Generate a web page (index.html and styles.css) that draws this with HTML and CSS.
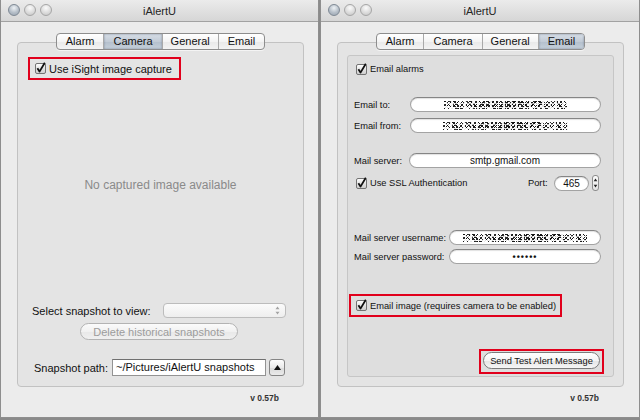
FILE: index.html
```html
<!DOCTYPE html>
<html>
<head>
<meta charset="utf-8">
<title>iAlertU</title>
<link rel="stylesheet" href="styles.css">
</head>
<body>
<div class="desk">
  <div class="window win-left">
    <div class="titlebar">
      <div class="lights"><span class="light close"></span><span class="light"></span><span class="light"></span></div>
      <div class="title">iAlertU</div>
      <div></div>
    </div>
    <div class="content">
      <div class="tabview">
        <div class="segmented">
          <span class="seg">Alarm</span><span class="seg sel">Camera</span><span class="seg gen">General</span><span class="seg">Email</span>
        </div>
        <div class="tabbox camera">
          <div class="hl hl-isight">
            <span class="cb"><svg viewBox="0 0 9 9" width="9" height="9"><path d="M1.4 4.3 L3.5 7.6 L8.8 -1.2" fill="none" stroke="#111" stroke-width="1.8" stroke-linejoin="round"/></svg></span>
            <span class="cb-text">Use iSight image capture</span>
          </div>
          <div class="preview">No captured image available</div>
          <div class="select-row">
            <span class="sel-lbl">Select snapshot to view:</span>
            <span class="popup"><svg width="5" height="9" viewBox="0 0 5 9"><path d="M2.5 0.5 L4.5 3.2 L0.5 3.2Z M2.5 8.5 L4.5 5.8 L0.5 5.8Z" fill="#a3a3a3"/></svg></span>
          </div>
          <div class="btn-row"><span class="pill disabled">Delete historical snapshots</span></div>
          <div class="path-row">
            <span class="path-lbl">Snapshot path:</span>
            <span class="pathfield">~/Pictures/iAlertU snapshots</span>
            <span class="sqbtn"><svg width="7" height="5" viewBox="0 0 7 5"><path d="M3.5 0 L7 5 L0 5Z" fill="#111"/></svg></span>
          </div>
        </div>
      </div>
      <div class="version">v 0.57b</div>
    </div>
  </div>

  <div class="window win-right">
    <div class="titlebar">
      <div class="lights"><span class="light close"></span><span class="light"></span><span class="light"></span></div>
      <div class="title">iAlertU</div>
      <div></div>
    </div>
    <div class="content">
      <div class="tabview">
        <div class="segmented">
          <span class="seg">Alarm</span><span class="seg">Camera</span><span class="seg gen">General</span><span class="seg sel">Email</span>
        </div>
        <div class="tabbox email">
          <div class="inner">
            <div class="cb-row alarms">
              <span class="cb"><svg viewBox="0 0 9 9" width="9" height="9"><path d="M1.4 4.3 L3.5 7.6 L8.8 -1.2" fill="none" stroke="#111" stroke-width="1.8" stroke-linejoin="round"/></svg></span>
              <span class="cb-text">Email alarms</span>
            </div>
            <div class="frow to">
              <span class="flbl">Email to:</span>
              <span class="field"><span class="noise n1"></span></span>
            </div>
            <div class="frow from">
              <span class="flbl">Email from:</span>
              <span class="field"><span class="noise n2"></span></span>
            </div>
            <div class="frow server">
              <span class="flbl">Mail server:</span>
              <span class="field">smtp.gmail.com</span>
            </div>
            <div class="ssl-row">
              <span class="cb"><svg viewBox="0 0 9 9" width="9" height="9"><path d="M1.4 4.3 L3.5 7.6 L8.8 -1.2" fill="none" stroke="#111" stroke-width="1.8" stroke-linejoin="round"/></svg></span>
              <span class="cb-text">Use SSL Authentication</span>
              <span class="port">
                <span class="port-lbl">Port:</span>
                <span class="field portfield">465</span>
                <span class="stepper"><svg width="5" height="12" viewBox="0 0 5 12"><path d="M2.5 1.5 L4.3 4.2 L0.7 4.2Z M2.5 10.5 L4.3 7.8 L0.7 7.8Z" fill="#222"/></svg></span>
              </span>
            </div>
            <div class="frow user">
              <span class="flbl wide">Mail server username:</span>
              <span class="field"><span class="noise n3"></span></span>
            </div>
            <div class="frow pass">
              <span class="flbl wide">Mail server password:</span>
              <span class="field dots">••••••</span>
            </div>
            <div class="hl hl-image">
              <span class="cb"><svg viewBox="0 0 9 9" width="9" height="9"><path d="M1.4 4.3 L3.5 7.6 L8.8 -1.2" fill="none" stroke="#111" stroke-width="1.8" stroke-linejoin="round"/></svg></span>
              <span class="cb-text">Email image (requires camera to be enabled)</span>
            </div>
            <div class="hl hl-send"><span class="pill send">Send Test Alert Message</span></div>
          </div>
        </div>
      </div>
      <div class="version">v 0.57b</div>
    </div>
  </div>
</div>
</body>
</html>
```

FILE: styles.css
```css
* { box-sizing: border-box; margin: 0; padding: 0; }
html, body { width: 640px; height: 420px; overflow: hidden; }
body {
  background: #8a8a8a;
  font-family: "Liberation Sans", Arial, sans-serif;
  font-size: 11px;
  color: #111;
}
.desk { display: flex; gap: 1px; height: 420px; }
.window {
  height: 418px;
  background: #ececec;
  border-left: 1px solid #8e8e8e;
  border-right: 1px solid #8e8e8e;
  border-bottom: 1px solid #8e8e8e;
  display: flex;
  flex-direction: column;
}
.win-left { width: 319px; }
.win-right { width: 320px; }

.titlebar {
  height: 22px;
  background: linear-gradient(#ebebeb, #d6d6d6);
  border-bottom: 1px solid #a2a2a2;
  display: grid;
  grid-template-columns: 1fr auto 1fr;
  align-items: center;
}
.lights { display: flex; gap: 4px; padding-left: 7px; align-self: start; margin-top: 4px; }
.light {
  width: 12px; height: 12px; border-radius: 50%;
  background: radial-gradient(circle at 50% 30%, #fbfbfb, #dcdcdc 55%, #c2c2c2);
  border: 1px solid #a6a6a6;
}
.light.close {
  background: radial-gradient(circle at 50% 30%, #eef2f5, #b5bec8 55%, #98a3af);
  border-color: #7f8994;
}
.title { color: #262626; font-size: 11px; }

.content { flex: 1; display: flex; flex-direction: column; padding: 11px 14px 0 16px; }
.win-right .content { padding-right: 15px; }
.tabview { display: flex; flex-direction: column; align-items: center; }
.segmented {
  position: relative; z-index: 1;
  display: flex; height: 17px; margin-bottom: -8px;
  border: 1px solid #8d8d8d; border-radius: 4px;
  background: linear-gradient(#ffffff, #f4f4f4 50%, #e9e9e9 51%, #f3f3f3);
  overflow: hidden;
  box-shadow: 0 1px 0 rgba(255,255,255,0.6);
}
.seg { padding: 0 9px; line-height: 15px; font-size: 11px; color: #111; border-left: 1px solid #a9a9a9; }
.seg:first-child { border-left: none; padding-left: 9px; }
.seg.gen { padding: 0 8px; }
.seg.sel {
  background: linear-gradient(#d7dee6, #c2cbd6 50%, #b3bfcc 51%, #c6d0da);
  box-shadow: inset 0 0 2px rgba(60,75,95,0.6);
}
.tabbox {
  width: 100%; height: 345px;
  border: 1px solid #c2c2c2; border-radius: 4px;
  background: #e4e4e4;
}

/* camera tab */
.camera { display: flex; flex-direction: column; padding: 14px 0 10px; }
.hl { border: 2px solid #e1001c; display: flex; align-items: center; }
.hl-isight { margin-left: 10px; width: 153px; height: 23px; padding-left: 5px; gap: 3px; }
.cb {
  width: 11px; height: 11px; flex: none;
  border: 1px solid #737373; border-radius: 2px;
  background: linear-gradient(#fefefe, #e2e2e2 55%, #d0d0d0);
}
.cb svg { display: block; overflow: visible; }
.cb-text { font-size: 11px; color: #111; white-space: nowrap; }
.preview {
  flex: 1; display: flex; align-items: center; justify-content: center;
  color: #8a8a8a; font-size: 12px;
}
.select-row { display: flex; align-items: center; height: 15px; margin-top: 13px; padding-left: 14px; }
.sel-lbl { width: 131px; color: #111; }
.popup {
  width: 123px; height: 15px;
  border: 1px solid #bcbcbc; border-radius: 4px;
  background: linear-gradient(#fbfbfb, #eeeeee);
  display: flex; justify-content: flex-end; align-items: center; padding-right: 5px;
}
.btn-row { margin-top: 5px; padding-left: 62px; display: flex; }
.pill {
  display: flex; align-items: center; justify-content: center;
  height: 17px; border-radius: 9px; white-space: nowrap;
}
.pill.disabled {
  width: 158px; color: #9c9c9c; border: 1px solid #b3b3b3;
  background: linear-gradient(#fbfbfb, #f1f1f1 50%, #e8e8e8 51%, #f0f0f0);
}
.path-row { margin-top: 19px; padding-left: 16px; display: flex; align-items: center; height: 17px; }
.path-lbl { width: 78px; }
.pathfield {
  width: 154px; height: 17px; line-height: 15px; padding-left: 3px;
  background: #fff; border: 1px solid #939393; border-top-color: #707070;
  white-space: nowrap; overflow: hidden;
}
.sqbtn {
  width: 16px; height: 17px; margin-left: 3px;
  border: 1px solid #858585; border-radius: 3px;
  background: linear-gradient(#fdfdfd, #eaeaea 50%, #d9d9d9 51%, #ebebeb);
  display: flex; align-items: center; justify-content: center;
}
.version { text-align: right; padding-right: 25px; margin-top: 6px; font-size: 8.5px; font-weight: bold; color: #333; }

/* email tab */
.email { padding: 12px 9px 9px; }
.inner {
  height: 100%;
  border: 1px solid #c6c6c6; border-radius: 3px;
  background: #dedede;
  padding: 0 12px 0 6px;
  display: flex; flex-direction: column;
  font-size: 9.3px;
}
.inner .cb-text { font-size: 9.3px; }
.cb-row { display: flex; align-items: center; gap: 3px; height: 12px; margin-left: 2px; }
.alarms { margin-top: 7px; }
.frow { display: flex; align-items: center; height: 15px; }
.to { margin-top: 22px; }
.from { margin-top: 6px; }
.server { margin-top: 20px; }
.user { margin-top: 39px; }
.pass { margin-top: 4px; }
.flbl { width: 56px; flex: none; color: #111; white-space: nowrap; }
.server .flbl { width: 55px; }
.flbl.wide { width: 95px; }
.field {
  flex: 1; height: 15px;
  background: #fff;
  border: 1px solid #a3a3a3; border-top-color: #858585;
  border-radius: 8px;
  box-shadow: inset 0 1px 1px rgba(0,0,0,0.12);
  display: flex; align-items: center; justify-content: center;
  font-size: 10px; color: #111;
}
.noise {
  display: block; height: 8px;
  background:
    repeating-linear-gradient(90deg, transparent 0 2px, rgba(255,255,255,0.9) 2px 3px, transparent 3px 7px, rgba(255,255,255,0.9) 7px 9px, transparent 9px 13px),
    repeating-linear-gradient(0deg, transparent 0 1px, rgba(255,255,255,0.85) 1px 2px, transparent 2px 5px, rgba(255,255,255,0.7) 5px 6px, transparent 6px 7px),
    repeating-linear-gradient(135deg, #111 0 1px, transparent 1px 3px, #222 3px 4px, transparent 4px 5px),
    repeating-linear-gradient(45deg, #1a1a1a 0 1px, #fff 1px 3px, #333 3px 4px, #fff 4px 6px);
}
.n1 { width: 123px; }
.n2 { width: 125px; }
.n3 { width: 124px; }
.dots { font-size: 9px; letter-spacing: 1px; font-weight: bold; }
.ssl-row { display: flex; align-items: center; gap: 3px; height: 16px; margin-top: 7px; margin-left: 2px; }
.port { margin-left: auto; display: flex; align-items: center; gap: 3px; margin-right: 2px; }
.port-lbl { width: 23px; }
.portfield { flex: none; width: 35px; }
.stepper {
  width: 7px; height: 16px;
  border: 1px solid #8d8d8d; border-radius: 3px;
  background: linear-gradient(#fbfbfb, #e2e2e2);
  display: flex; align-items: center; justify-content: center;
}
.stepper svg { display: block; flex: none; }
.hl-image { margin-top: 30px; margin-left: -5px; width: 213px; height: 23px; padding-left: 5px; gap: 3px; }
.hl-send {
  margin-top: 32px; align-self: flex-end; margin-right: -3px;
  width: 125px; height: 25px; justify-content: center; padding-bottom: 2px;
}
.pill.send {
  width: 117px; font-size: 9.3px; color: #111;
  border: 1px solid #7b7b7b;
  background: linear-gradient(#ffffff, #f4f4f4 50%, #e4e4e4 51%, #f6f6f6);
}
```
